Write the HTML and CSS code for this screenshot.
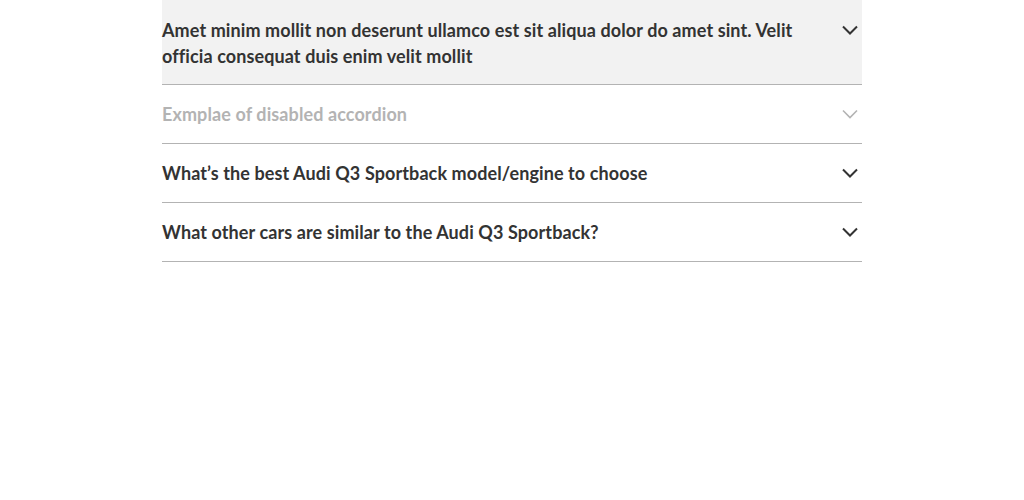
FILE: index.html
```html
<!DOCTYPE html>
<html lang="en">
<head>
<meta charset="utf-8">
<title>Accordion</title>
<link rel="stylesheet" href="styles.css">
</head>
<body>
<div class="accordion">
  <div class="item item-open">
    <div class="title">Amet minim mollit non deserunt ullamco est sit aliqua dolor do amet sint. Velit officia consequat duis enim velit mollit</div>
    <svg class="chev" width="16" height="10" viewBox="0 0 16 10"><path d="M1 1.5 L8 8.5 L15 1.5" fill="none" stroke="currentColor" stroke-width="2"/></svg>
  </div>
  <div class="item item-disabled">
    <div class="title">Exmplae of disabled accordion</div>
    <svg class="chev" width="16" height="10" viewBox="0 0 16 10"><path d="M1 1.5 L8 8.5 L15 1.5" fill="none" stroke="currentColor" stroke-width="1.6"/></svg>
  </div>
  <div class="item">
    <div class="title">What’s the best Audi Q3 Sportback model/engine to choose</div>
    <svg class="chev" width="16" height="10" viewBox="0 0 16 10"><path d="M1 1.5 L8 8.5 L15 1.5" fill="none" stroke="currentColor" stroke-width="2"/></svg>
  </div>
  <div class="item">
    <div class="title">What other cars are similar to the Audi Q3 Sportback?</div>
    <svg class="chev" width="16" height="10" viewBox="0 0 16 10"><path d="M1 1.5 L8 8.5 L15 1.5" fill="none" stroke="currentColor" stroke-width="2"/></svg>
  </div>
</div>
</body>
</html>
```

FILE: styles.css
```css
html, body {
  margin: 0;
  padding: 0;
  background: #fff;
}
body {
  font-family: Lato, "Open Sans", sans-serif;
  color: #333;
}
.accordion {
  width: 700px;
  margin: 0 auto;
  display: flex;
  flex-direction: column;
}
.item {
  display: flex;
  align-items: flex-start;
  justify-content: space-between;
  padding: 16px 0;
  border-bottom: 1px solid #b3b3b3;
  font-size: 18px;
  line-height: 26px;
  font-weight: 700;
}
.item-open {
  background: #f2f2f2;
  padding: 17px 0 15px;
}
.title {
  flex: 1;
  padding-right: 30px;
  letter-spacing: 0.1px;
}
.chev {
  flex: none;
  margin-top: 8px;
  margin-right: 4px;
  color: #333;
}
.item-disabled .title,
.item-disabled .chev {
  color: #b3b3b3;
}
```
